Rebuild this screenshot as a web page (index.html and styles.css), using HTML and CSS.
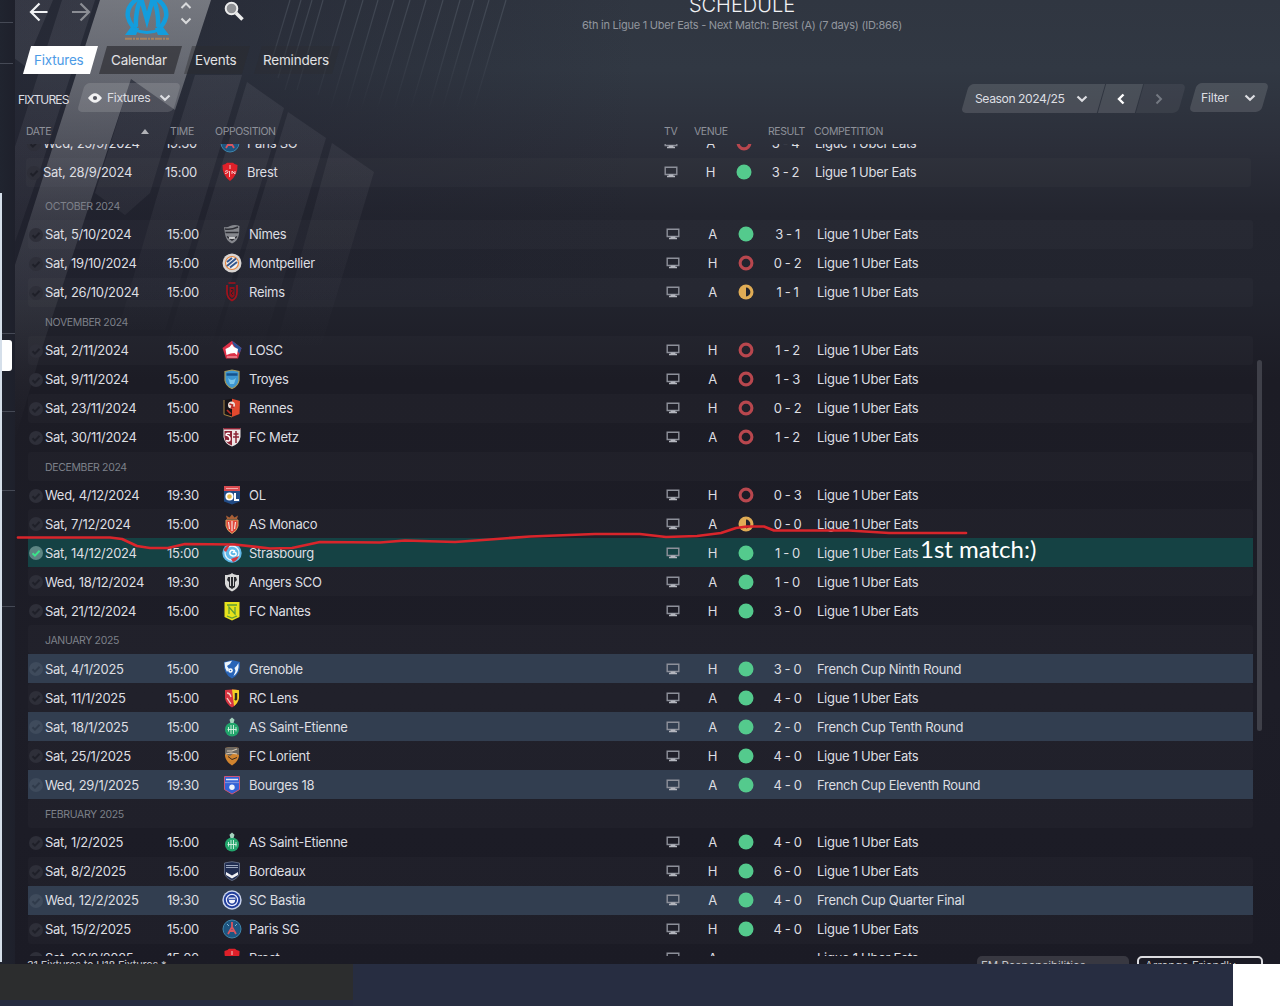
FILE: index.html
```html
<!DOCTYPE html>
<html lang="en">
<head>
    <meta charset="UTF-8">
    <meta name="viewport" content="width=device-width, initial-scale=1.0">
    <title>Schedule</title>
    <link rel="stylesheet" href="styles.css">
</head>
<body>
    <!-- Icons and club crests -->
    <svg class="defs" width="0" height="0">
        <symbol id="tv" viewBox="0 0 14 12"><path d="M1.2 1.2h11.6v7.3H1.2z" fill="none" stroke="#8d909a" stroke-width="1.4"/><path d="M4.6 8.6h4.8v1.2H11v1.4H3V9.800h1.600z" fill="#b4b6be"/></symbol>
        <symbol id="tick" viewBox="0 0 14 14"><circle cx="7" cy="7" r="7" class="tick-bg"/><path d="M3.500 7.300l2.400 2.300 4.700-4.800" fill="none" class="tick-mark" stroke-width="2"/></symbol>
        <symbol id="chevron" viewBox="0 0 12 8"><path d="M1.500 1.500L6 5.800l4.500-4.300" fill="none" stroke="currentColor" stroke-width="2.200"/></symbol>
        <symbol id="win" viewBox="0 0 16 16"><circle cx="8" cy="8" r="7.500" fill="#54ca8d"/></symbol>
        <symbol id="loss" viewBox="0 0 16 16"><circle cx="8" cy="8" r="5.900" fill="none" stroke="#b8474e" stroke-width="3.100"/></symbol>
        <symbol id="draw" viewBox="0 0 16 16"><circle cx="8" cy="8" r="7.500" fill="#e0ac55"/><path d="M8 3.600a4.400 4.400 0 0 1 0 8.800z" fill="#23242d"/></symbol>

        <symbol id="brest" viewBox="0 0 20 20"><path d="M2.500 3Q6 2 7 .8h6Q14 2 17.500 3q.5 10-7.500 16Q2 13 2.500 3z" fill="#df2029"/><path d="M10 3v4M5 9.500q3-2 3 0t-3 2M9.500 9v6M12 12V9l3 3V9" fill="none" stroke="#f3c9c9"/></symbol>
        <symbol id="nimes" viewBox="0 0 20 20"><path d="M2 3q3 1 6-1 5-2 9.500 0L17 10q-1 7-7 9.500Q4 17 3 10z" fill="#85878d"/><path d="M3 5q6 1 13-2M3.500 8.500h13M5 12.500l5 3.500 5-3.500" fill="none" stroke="#2d2e35" stroke-width="1.500"/><path d="M7 14h6" stroke="#e4e4e6" stroke-width="1.500"/></symbol>
        <symbol id="montpellier" viewBox="0 0 20 20"><circle cx="10" cy="10" r="9.500" fill="#d9d5d3"/><circle cx="10" cy="10" r="6.500" fill="#eee" stroke="#e7853d" stroke-width="1.200"/><path d="M5 9l5-4M5 13l9-7.500M8 14.500l7-5.500" stroke="#32558d" stroke-width="2"/></symbol>
        <symbol id="reims" viewBox="0 0 20 20"><path d="M6.500 1h7M5 3v7q0 6 5 8.500 5-2.500 5-8.500V3" fill="none" stroke="#a3121c" stroke-width="1.700"/><path d="M7.500 5h5v9L10 16l-2.500-2z" fill="#8f101a"/><path d="M9 7.500h2v2L9 11l2 2" fill="none" stroke="#25232b"/></symbol>
        <symbol id="losc" viewBox="0 0 20 20"><path d="M10 .7L19.500 8 16 18.500H4L.5 8z" fill="#dd3047"/><path d="M10 .7L19.500 8 17.500 14 11 4z" fill="#28549a"/><path d="M4.500 15l-1-6 4-2 2.500-3 2 3 4 2-1 6-2.500-2-4 .5z" fill="#fff"/><path d="M5 17h10" stroke="#f1b8bd"/></symbol>
        <symbol id="troyes" viewBox="0 0 20 20"><path d="M3 2.500L10 1l7 1.500v9Q16 17 10 19.500 4 17 3 11.500z" fill="#3d96d0" stroke="#a79b5a" stroke-width="1.200"/><path d="M4.500 5.500h11" stroke="#15528c" stroke-width="2.500"/><path d="M6 9q4 4 8 0l-2 6H8z" fill="#79c5ea"/></symbol>
        <symbol id="rennes" viewBox="0 0 20 20"><path d="M2 2L10 .7V19l-8-2z" fill="#161317"/><path d="M10 .7L18 3l-.5 13L10 19z" fill="#e2492e"/><path d="M2 2v14.500l8 2.500" fill="none" stroke="#a88444"/><circle cx="9.500" cy="7" r="3.500" fill="#ede3dc"/><path d="M7.500 6l3 1-1 3 3-1M5 12l4 4" fill="none" stroke="#b92b25" stroke-width="1.700"/></symbol>
        <symbol id="metz" viewBox="0 0 20 20"><path d="M1.500 1h17v9q-1 7-8.500 9.500Q2.500 17 1.500 10z" fill="#eee5e5"/><path d="M2.500 4H10v14.500Q3 16 2.500 10zM1.500 1h17v1.500h-17z" fill="#8d2436"/><path d="M8 6.500q-4-1-4 1.500 4 1 4 4t-4 1.500" fill="none" stroke="#fff" stroke-width="1.500"/><path d="M14 4v12M11.500 7h5M11 10h6" stroke="#8d2436" stroke-width="1.500"/></symbol>
        <symbol id="ol" viewBox="0 0 20 20"><path d="M2 1h16v5H2z" fill="#d84a4f"/><path d="M2 6h16v10.500L10 19.500l-8-3z" fill="#214b85"/><path d="M4 3.500h12" stroke="#f0abab"/><circle cx="7.500" cy="11.500" r="3.200" fill="#e6b94a" stroke="#fff" stroke-width="1.800"/><path d="M13 8v7h4" fill="none" stroke="#fff" stroke-width="2"/></symbol>
        <symbol id="monaco" viewBox="0 0 20 20"><path d="M5 5L4 1.500l3.500 2L10 .5l2.500 3 3.500-2L15 5z" fill="#a85f36"/><path d="M4 6h12v6q-1 5-6 7.500Q5 17 4 12z" fill="#e2463b" stroke="#d4a15e"/><path d="M6.500 8l1 7M10 7v10M13.500 8l-1 7" stroke="#f6e0d8" stroke-width="1.200"/></symbol>
        <symbol id="strasbourg" viewBox="0 0 20 20"><circle cx="10" cy="10" r="9.700" fill="#60b8e8"/><circle cx="10" cy="10" r="7" fill="none" stroke="#e8f3fa" stroke-width="1.300"/><path d="M1.500 7Q4 2.500 8 2l-4 7zM9 16l8-3q-2 5-6 6z" fill="#d53942"/><path d="M13 8q-4-2-5 1t3 4q4 0 3-3-2-2-3 0" fill="none" stroke="#fff" stroke-width="1.500"/></symbol>
        <symbol id="angers" viewBox="0 0 20 20"><path d="M3 3Q8 3 10 1q2 2 7 2v9q-1 5-7 7.500Q4 17 3 12z" fill="#d8d8d8"/><path d="M6 5h8l1 3-2 2v5l-3 2-3-2v-5L5 8z" fill="#292a2f"/><path d="M8.500 5v9M11.500 5v9" stroke="#d2d2d2"/></symbol>
        <symbol id="nantes" viewBox="0 0 20 20"><path d="M2.500 1h15v15L10 19.500 2.500 16z" fill="#e7e31c"/><path d="M7 13V6l6 7V6M5 4h10M5 15l5 2 5-2" fill="none" stroke="#5f9d35" stroke-width="1.300"/></symbol>
        <symbol id="grenoble" viewBox="0 0 20 20"><path d="M2 3l8-2 8 2q1 12-8 16.500Q1 15 2 3z" fill="#2864b7"/><path d="M2.500 3.500L10 1.700 8 5 5 7l2 3-2 3Q2.500 9 2.500 3.500zM16.500 4q1 9-5 13l2-5-1-3 2-2z" fill="#edf4fa"/><circle cx="8.500" cy="11.500" r="2.300" fill="#fff"/><circle cx="8.500" cy="11.500" r=".8" fill="#2864b7"/></symbol>
        <symbol id="lens" viewBox="0 0 20 20"><path d="M3 2q7-1 14 0v8q-1 6-7 9.500Q4 16 3 10z" fill="#d83442"/><path d="M10 1.500q4 0 7 .8V10q-1 5-5 8z" fill="#f2d026"/><path d="M5 5q3 0 4 4M5 10l4 6" fill="none" stroke="#f5d2c6" stroke-width="1.300"/><path d="M14 5v6l-1 1" fill="none" stroke="#2b2822" stroke-width="2.400"/></symbol>
        <symbol id="etienne" viewBox="0 0 20 20"><circle cx="10" cy="12.500" r="7" fill="#22a56c"/><path d="M10 .5l2.500 2.300L11.500 6h-3l-1-3.200z" fill="#a6d4bf"/><path d="M6.500 10v4.500M9 8v9M11.500 8v9M14 10v4.500M5.500 12.500h9" stroke="#d8f3e4" stroke-width=".9"/></symbol>
        <symbol id="lorient" viewBox="0 0 20 20"><path d="M3 2q7-2 14 0v8q-1 6-7 9.500Q4 16 3 10z" fill="#d1842f"/><path d="M3 2q7-2 14 0v7l-5-2-4 3-5-2z" fill="#6b6762"/><path d="M5 5h5l5-2M4 8l5-1 6 1" fill="none" stroke="#d8c8b1" stroke-width="1.200"/><path d="M6 10.500l4 3 5-2" fill="none" stroke="#392a22"/></symbol>
        <symbol id="bourges" viewBox="0 0 20 20"><path d="M2.500 1.500h15v13L10 19l-7.500-4.500z" fill="#3362d6" stroke="#cf5576"/><path d="M4 4.500h12" stroke="#e9ecf8" stroke-width="1.500"/><path d="M3 7.500h14" stroke="#7790dd" stroke-width="1.200"/><circle cx="10" cy="12.200" r="2.700" fill="#eef3fc"/></symbol>
        <symbol id="bordeaux" viewBox="0 0 20 20"><path d="M2.500 2L10 .7 17.500 2v10q-1 5-7.500 7.500Q3.500 17 2.500 12z" fill="#202d51" stroke="#6e7891" stroke-width=".8"/><path d="M4 4.500h12M4 6.500h12" stroke="#9ca7be" stroke-width="1.200"/><path d="M4 11l6 3.500 6-3.500v3l-6 3.500L4 14z" fill="#f1f1f5"/></symbol>
        <symbol id="bastia" viewBox="0 0 20 20"><circle cx="10" cy="10" r="9.700" fill="#c8d2eb"/><circle cx="10" cy="10" r="8.200" fill="#213e9b"/><circle cx="10" cy="10" r="5.600" fill="none" stroke="#eef" stroke-width="1.200"/><path d="M6.500 7.500h7l-.7 4.500q-2.800 3-5.600 0z" fill="#f1f3fb"/><path d="M7 9.300h6" stroke="#213e9b"/></symbol>
        <symbol id="psg" viewBox="0 0 20 20"><circle cx="10" cy="10" r="9" fill="#1e5580" stroke="#3f86ac"/><path d="M10 3v5l-4 7M10 8l4 7M7.500 12h5" fill="none" stroke="#d9565f" stroke-width="1.800"/><path d="M5 5l2 2M15 5l-2 2" stroke="#7fb4d3"/></symbol>
    </svg>

    <div class="app">
        <svg class="backdrop" width="1280" height="520" viewBox="0 0 1280 520">
            <defs>
                <linearGradient id="fadeBand" x1="0" y1="0" x2="0" y2="1">
                    <stop offset="0" stop-color="#b4b6ba" stop-opacity=".55"/>
                    <stop offset=".22" stop-color="#a6a8ae" stop-opacity=".44"/>
                    <stop offset=".5" stop-color="#9da0a8" stop-opacity=".2"/>
                    <stop offset="1" stop-color="#888b96" stop-opacity="0"/>
                </linearGradient>
                <linearGradient id="fadeShard" gradientUnits="userSpaceOnUse" x1="0" y1="40" x2="0" y2="350">
                    <stop offset="0" stop-color="#8f909c" stop-opacity=".15"/>
                    <stop offset=".5" stop-color="#8f909c" stop-opacity=".09"/>
                    <stop offset="1" stop-color="#8f909c" stop-opacity="0"/>
                </linearGradient>
                <linearGradient id="fadeLine" gradientUnits="userSpaceOnUse" x1="0" y1="0" x2="0" y2="110">
                    <stop offset="0" stop-color="#76808c" stop-opacity=".3"/>
                    <stop offset="1" stop-color="#76808c" stop-opacity="0"/>
                </linearGradient>
            </defs>
            <path class="band" d="M100 0H211L175 110 131 79 43 345 15 440V265L38 193z"/>
            <path class="shard" d="M14 0H53L25 66 14 58zM62 0H95L40 170 14 245V150zM131 79L175 110 150 193 125 215 95 193zM195 75H242L165 330H118L158 193zM247 82L284 108 210 350H165zM288 112L326 138 262 350H215zM332 143L374 172 320 350H275z"/>
            <path class="streaks" d="M290 0L272 60M301 0L278 78M312 0L285 90M323 0L297 90M346 0L318 95M363 0L330 110M378 0L343 120M394 0L358 120M410 0L374 120M426 0L388 130M443 0L403 135M460 0L420 140M474 0L432 145M489 0L445 150M506 0L460 155"/>
        </svg>

        <aside class="rail">
            <span class="rail-line rail-a"></span>
            <span class="rail-line rail-b"></span>
            <span class="rail-line rail-c"></span>
            <span class="rail-active"></span>
            <span class="rail-line rail-d"></span>
            <span class="rail-line rail-e"></span>
            <span class="rail-line rail-f"></span>
        </aside>

        <main class="screen">
            <header class="topbar">
                <div class="nav-icons">
                    <svg width="20" height="20" viewBox="0 0 20 20"><path d="M18.500 10H2M10.500 1.500L2 10l8.500 8.500" fill="none" stroke="#f1f2f4" stroke-width="2.200"/></svg>
                    <svg class="next" width="20" height="20" viewBox="0 0 20 20"><path d="M1 10h17M9.500 1.500L18 10l-8.500 8.500" fill="none" stroke="#8b8d94" stroke-width="2.200"/></svg>
                    <svg class="club" width="48" height="42" viewBox="0 0 48 42">
                        <path d="M14 -1Q3 7 5 17q2 8 8 12M34-1q11 8 9 18-2 8-8 12" fill="none" stroke="#139ddd" stroke-width="4.500"/>
                        <path d="M2 35l6-8 8 1-3 7zM46 35l-6-8-8 1 3 7z" fill="#139ddd"/>
                        <path d="M13 27Q12 12 18-2l6 22 6-22q6 14 5 29" fill="none" stroke="#139ddd" stroke-width="4.500"/>
                        <path d="M10 29q14 7 28 0" fill="none" stroke="#139ddd" stroke-width="3"/>
                        <path d="M2 38.800h45" stroke="#a8825f" stroke-width="2" stroke-dasharray="7 1 2 1 3 1"/>
                    </svg>
                    <svg class="switch" width="12" height="24" viewBox="0 0 12 24"><path d="M1.500 7L6 2.500 10.500 7M1.500 17.500L6 22l4.500-4.500" fill="none" stroke="#d8d9db" stroke-width="2"/></svg>
                    <svg class="search" width="20" height="20" viewBox="0 0 20 20"><circle cx="7.500" cy="7.500" r="5.800" fill="#8e9094" stroke="#eceded" stroke-width="2"/><path d="M12 12l6.500 6.500" stroke="#eceded" stroke-width="3.500"/></svg>
                </div>
                <div class="title">
                    <h1>SCHEDULE</h1>
                    <p>6th in Ligue 1 Uber Eats - Next Match: Brest (A) (7 days) (ID:866)</p>
                </div>
            </header>

            <nav class="tabs">
                <a class="tab active"><span>Fixtures</span></a>
                <a class="tab tab-calendar"><span>Calendar</span></a>
                <a class="tab tab-events"><span>Events</span></a>
                <a class="tab tab-reminders"><span>Reminders</span></a>
            </nav>

            <div class="toolbar">
                <h2>FIXTURES</h2>
                <div class="pill view">
                    <svg width="14" height="10" viewBox="0 0 14 10"><path d="M0 5q7-9.500 14 0-7 9.500-14 0z" fill="#f1f1f2"/><circle cx="7" cy="5" r="2.100" fill="#54565f"/></svg>
                    <span>Fixtures</span>
                    <svg class="chev" width="12" height="8"><use href="#chevron"/></svg>
                </div>
                <div class="season">
                    <div class="pill year"><span>Season 2024/25</span><svg class="chev" width="12" height="8"><use href="#chevron"/></svg></div>
                    <div class="pill prev"><svg width="8" height="12" viewBox="0 0 8 12"><path d="M6.500 1.500L2 6l4.500 4.500" fill="none" stroke="#fff" stroke-width="2.400"/></svg></div>
                    <div class="pill nextyear"><svg width="8" height="12" viewBox="0 0 8 12"><path d="M1.500 1.500L6 6l-4.500 4.500" fill="none" stroke="#747982" stroke-width="2"/></svg></div>
                </div>
                <div class="pill filter"><span>Filter</span><svg class="chev" width="12" height="8"><use href="#chevron"/></svg></div>
            </div>

            <div class="columns">
                <span>DATE</span><i class="sort"></i><span>TIME</span><span>OPPOSITION</span><span>TV</span><span>VENUE</span><span>RESULT</span><span>COMPETITION</span>
            </div>
            <div class="list list-top" id="september"></div>
            <div class="list list-main" id="season"></div>

            <footer class="actions">
                <span class="count">31 Fixtures to U18 Fixtures *</span>
                <span class="button dark">FM Responsibilities <b>⌄</b></span>
                <span class="button outline">Arrange Friendly <b>⌄</b></span>
            </footer>
        </main>

        <span class="scrollbar"></span>

        <svg class="redline" width="960" height="40" viewBox="0 0 960 40">
            <path d="M3 17.500H95l12 1.500 15 7 13 2h18l17-4 50 .5 35 4 22-.5 28-6 60 .5 25-2 50 1.500 35-2.500 40-3 65-2.500h45l26 3 31-1 24-3 15-5 11-1.500h17l10 4h75l40 2.500h77" fill="none" stroke="#d9252b" stroke-width="2.700" stroke-linejoin="round" stroke-linecap="round"/>
        </svg>
        <span class="note">1st match:)</span>
    </div>
    <div class="desktop">
        <div class="desktop-left"></div>
        <div class="desktop-mid"></div>
        <div class="desktop-right"></div>
    </div>
    <script src="script.js"></script>
</body>
</html>
```
FILE: styles.css
```css
* {
    box-sizing: border-box;
}
body {
    margin: 0;
    width: 1280px;
    height: 1006px;
    overflow: hidden;
    font-family: Inter, "Open Sans", sans-serif;
    font-size: 13px;
    color: #dddee2;
    background: #272d41;
}
h1, h2, p {
    margin: 0;
    font-weight: 400;
}
svg {
    display: block;
    flex: none;
}
.defs {
    position: absolute;
}
.app {
    position: relative;
    display: flex;
    height: 964px;
    overflow: hidden;
    background: linear-gradient(#303641 0, #313843 70px, #2b2e39 150px, #23252f 215px, #22242e 290px, #1c1c25 380px, #1d1d27 700px, #1b1b25 964px);
}
.backdrop {
    position: absolute;
    left: 0;
    top: 0;
}
/* The left part of the header is a bit darker */
.app::before {
    content: "";
    position: absolute;
    left: 0;
    top: 0;
    width: 640px;
    height: 300px;
    background: linear-gradient(90deg, rgba(30, 31, 44, .6), rgba(30, 31, 44, 0));
}
.band {
    fill: url(#fadeBand);
}
.shard {
    fill: url(#fadeShard);
}
.streaks {
    fill: none;
    stroke: url(#fadeLine);
    stroke-width: 1.2;
}

/* Left edge of the side menu */
.rail {
    position: relative;
    width: 15px;
    flex: none;
    background: linear-gradient(90deg, #20242f, #1e202b);
}
.rail::before {
    content: "";
    position: absolute;
    left: 0;
    top: 193px;
    width: 2px;
    bottom: 2px;
    background: #d5dfea;
}
.rail-line {
    position: absolute;
    left: 2px;
    width: 13px;
    height: 1px;
    background: #454955;
}
.rail-a { top: 22px; left: 0; }
.rail-b { top: 63px; left: 0; }
.rail-c { top: 333px; }
.rail-d { top: 411px; }
.rail-e { top: 490px; }
.rail-f { top: 606px; }
.rail-active {
    position: absolute;
    left: 2px;
    top: 340px;
    width: 10px;
    height: 31px;
    border-radius: 0 3px 3px 0;
    background: #fff;
}

.screen {
    position: relative;
    flex: 1;
    min-width: 0;
    display: flex;
    flex-direction: column;
}
.topbar {
    display: flex;
    height: 46px;
}
.nav-icons {
    display: flex;
    width: 557px;
    padding-left: 14px;
}
.nav-icons svg {
    margin-top: 2px;
}
.nav-icons .next {
    margin-left: 22px;
}
.nav-icons .club {
    margin: 0 0 0 32px;
}
.nav-icons .switch {
    margin: 1px 0 0 9px;
}
.nav-icons .search {
    margin: 1px 0 0 32px;
}
.title {
    width: 340px;
    text-align: center;
}
.title h1 {
    height: 18px;
    margin-top: -7px;
    line-height: 24px;
    font-size: 20px;
    font-weight: 300;
    color: #f0f1f3;
}
.title p {
    margin-top: 7px;
    font-size: 11px;
    line-height: 14px;
    letter-spacing: -.24px;
    color: #92969e;
    white-space: nowrap;
}

.tabs {
    display: flex;
    height: 28px;
    padding-left: 12px;
    margin-bottom: 1px;
}
.tab {
    display: flex;
    align-items: center;
    justify-content: center;
    width: 67px;
    margin-right: 9px;
    font-size: 13.5px;
    letter-spacing: -.2px;
    color: #e2e2e4;
    transform: skewX(-16deg);
    background: rgba(42, 42, 46, .65);
}
.tab span {
    transform: skewX(16deg);
}
.tab.active {
    color: #4d9be6;
    background: #fff;
}
.tab.active span { margin-left: -3px; }
.tab-calendar { width: 75px; margin-right: 10px; }
.tab-events { width: 58px; margin-right: 12px; background: rgba(42, 42, 46, .4); }
.tab-reminders { width: 78px; background: rgba(42, 42, 46, .3); }
.tab-calendar span { margin-left: -4px; }
.tab-events span,
.tab-reminders span { margin-left: -3px; }

.toolbar {
    display: flex;
    height: 42px;
    padding: 8px 11px 0 3px;
}
.toolbar h2 {
    width: 59px;
    font-size: 12px;
    line-height: 33px;
    letter-spacing: -.85px;
}
.pill {
    position: relative;
    display: flex;
    align-items: center;
    height: 29px;
    font-size: 12.2px;
    letter-spacing: -.2px;
}
.pill::before {
    content: "";
    position: absolute;
    inset: 0 4px;
    border-radius: 5px;
    background: rgba(255, 255, 255, .13);
    transform: skewX(-16deg);
}
.pill span,
.pill svg {
    position: relative;
}
.view {
    width: 104px;
    padding-left: 11px;
}
.view span {
    width: 44px;
    margin: 0 8px 0 5px;
    letter-spacing: -.35px;
}
.season {
    display: flex;
    margin-left: auto;
    padding-top: 1px;
}
.year {
    width: 144px;
    padding-left: 14px;
}
.year span {
    width: 90px;
    margin-right: 11px;
    letter-spacing: -.45px;
    white-space: nowrap;
}
.year::before { border-radius: 5px 0 0 5px; }
.prev {
    width: 45px;
    margin-left: -7px;
    padding-left: 19px;
}
.prev::before { border-radius: 0; }
.nextyear {
    width: 50px;
    margin-left: -7px;
    padding-left: 19px;
}
.nextyear::before {
    border-radius: 0 5px 5px 0;
    background: rgba(255, 255, 255, .06);
}
.filter {
    width: 80px;
    margin-left: 3px;
    padding-left: 12px;
}
.filter span {
    width: 31px;
    margin-right: 12px;
}

.columns {
    display: grid;
    grid-template-columns: 115px 29px 45px 449px 30px 74px 46px 1fr;
    align-items: center;
    height: 27px;
    padding: 1px 0 0 11px;
    font-size: 10.5px;
    color: #8e919a;
    letter-spacing: -.4px;
}
.sort {
    width: 0;
    border: 4px solid transparent;
    border-top: 0;
    border-bottom: 5px solid #b2b3b8;
}

.list {
    margin-left: 13px;
    width: 1225px;
    overflow: hidden;
}
.list-top {
    height: 47px;
    margin-left: 11px;
    padding: 0;
}
.list-top .row:first-child {
    margin-top: -15px;
}
.list-main {
    height: 765px;
}
.row {
    --tick-bg: #2e2f39;
    --tick-mark: #1f2029;
    display: grid;
    grid-template-columns: 17px 114px 40px 50px 408px 32px 47px 20px 61px 1fr;
    align-items: center;
    height: 28.960px;
    border-radius: 3px;
    white-space: nowrap;
    letter-spacing: -.28px;
}
.row:nth-child(even) {
    background: rgba(255, 255, 255, .018);
}
.row.month {
    display: block;
    padding-left: 17px;
    font-size: 10.5px;
    line-height: 31px;
    letter-spacing: -.35px;
    color: #7d8089;
}
.row.cup {
    --tick-bg: #3f4b5c;
    --tick-mark: #303b4b;
    background: #323e50;
    border-radius: 0;
}
.row.current {
    --tick-bg: #5d8583;
    --tick-mark: #3be38b;
    background: #154244;
    border-radius: 0;
}
.tick {
    margin: 1px 0 0 1px;
}
.tick-bg { fill: var(--tick-bg); }
.tick-mark { stroke: var(--tick-mark); }
.time {
    text-align: right;
}
.crest {
    margin-left: 23px;
}
.tv,
.form {
    justify-self: center;
}
.venue,
.score {
    text-align: center;
}
.score {
    padding-left: 2px;
    letter-spacing: -.4px;
}

.actions {
    display: flex;
    height: 8px;
    padding-left: 12px;
    overflow: hidden;
    font-size: 11.5px;
    line-height: 14px;
    color: #c4c5ca;
    white-space: nowrap;
}
.count {
    width: 950px;
    padding-top: 2px;
    font-size: 11px;
    letter-spacing: -.2px;
}
.button {
    height: 28px;
    padding: 3px 4px;
    border-radius: 5px;
}
.button.dark {
    width: 152px;
    background: #383841;
}
.button.outline {
    width: 126px;
    margin-left: 8px;
    padding: 1px 6px;
    border: 2px solid #dcdce0;
}
.scrollbar {
    position: absolute;
    left: 1257px;
    top: 360px;
    width: 5px;
    height: 371px;
    border-radius: 3px;
    background: #3f4049;
}

/* Hand-drawn annotation over the list */
.redline {
    position: absolute;
    left: 15px;
    top: 520px;
}
.note {
    position: absolute;
    left: 920px;
    top: 534px;
    font-family: Lato, sans-serif;
    font-size: 24px;
    line-height: 30px;
    color: #fff;
}

.desktop {
    display: flex;
    height: 42px;
    background: #262b40;
}
.desktop-left {
    width: 353px;
    height: 36px;
    background: #2c2d2e;
}
.desktop-mid {
    width: 880px;
    background: #272d41;
}
.desktop-right {
    flex: 1;
    background: #fff;
}
```
FILE: script.js
```js
const L1 = 'Ligue 1 Uber Eats';

// [date, time, crest, opposition, venue, form, score, competition]
const september = [
    ['Wed, 25/9/2024', '19:30', 'psg', 'Paris SG', 'A', 'loss', '3 - 4', L1],
    ['Sat, 28/9/2024', '15:00', 'brest', 'Brest', 'H', 'win', '3 - 2', L1]
];

const season = [
    'OCTOBER 2024',
    ['Sat, 5/10/2024', '15:00', 'nimes', 'Nîmes', 'A', 'win', '3 - 1', L1],
    ['Sat, 19/10/2024', '15:00', 'montpellier', 'Montpellier', 'H', 'loss', '0 - 2', L1],
    ['Sat, 26/10/2024', '15:00', 'reims', 'Reims', 'A', 'draw', '1 - 1', L1],
    'NOVEMBER 2024',
    ['Sat, 2/11/2024', '15:00', 'losc', 'LOSC', 'H', 'loss', '1 - 2', L1],
    ['Sat, 9/11/2024', '15:00', 'troyes', 'Troyes', 'A', 'loss', '1 - 3', L1],
    ['Sat, 23/11/2024', '15:00', 'rennes', 'Rennes', 'H', 'loss', '0 - 2', L1],
    ['Sat, 30/11/2024', '15:00', 'metz', 'FC Metz', 'A', 'loss', '1 - 2', L1],
    'DECEMBER 2024',
    ['Wed, 4/12/2024', '19:30', 'ol', 'OL', 'H', 'loss', '0 - 3', L1],
    ['Sat, 7/12/2024', '15:00', 'monaco', 'AS Monaco', 'A', 'draw', '0 - 0', L1],
    ['Sat, 14/12/2024', '15:00', 'strasbourg', 'Strasbourg', 'H', 'win', '1 - 0', L1, 'current'],
    ['Wed, 18/12/2024', '19:30', 'angers', 'Angers SCO', 'A', 'win', '1 - 0', L1],
    ['Sat, 21/12/2024', '15:00', 'nantes', 'FC Nantes', 'H', 'win', '3 - 0', L1],
    'JANUARY 2025',
    ['Sat, 4/1/2025', '15:00', 'grenoble', 'Grenoble', 'H', 'win', '3 - 0', 'French Cup Ninth Round', 'cup'],
    ['Sat, 11/1/2025', '15:00', 'lens', 'RC Lens', 'A', 'win', '4 - 0', L1],
    ['Sat, 18/1/2025', '15:00', 'etienne', 'AS Saint-Etienne', 'A', 'win', '2 - 0', 'French Cup Tenth Round', 'cup'],
    ['Sat, 25/1/2025', '15:00', 'lorient', 'FC Lorient', 'H', 'win', '4 - 0', L1],
    ['Wed, 29/1/2025', '19:30', 'bourges', 'Bourges 18', 'A', 'win', '4 - 0', 'French Cup Eleventh Round', 'cup'],
    'FEBRUARY 2025',
    ['Sat, 1/2/2025', '15:00', 'etienne', 'AS Saint-Etienne', 'A', 'win', '4 - 0', L1],
    ['Sat, 8/2/2025', '15:00', 'bordeaux', 'Bordeaux', 'H', 'win', '6 - 0', L1],
    ['Wed, 12/2/2025', '19:30', 'bastia', 'SC Bastia', 'A', 'win', '4 - 0', 'French Cup Quarter Final', 'cup'],
    ['Sat, 15/2/2025', '15:00', 'psg', 'Paris SG', 'H', 'win', '4 - 0', L1],
    ['Sat, 22/2/2025', '15:00', 'brest', 'Brest', 'A', '', '-', L1]
];

function icon(name, cls, w, h) {
    return `<svg class="${cls}" width="${w}" height="${h}"><use href="#${name}"/></svg>`;
}

function renderRow(item) {
    if (typeof item === 'string') {
        return `<div class="row month">${item}</div>`;
    }
    const [date, time, crest, team, venue, form, score, comp, type] = item;
    return `<div class="row ${type || ''}">
        ${icon('tick', 'tick', 14, 14)}
        <span>${date}</span>
        <span class="time">${time}</span>
        ${icon(crest, 'crest', 20, 20)}
        <span>${team}</span>
        ${icon('tv', 'tv', 14, 12)}
        <span class="venue">${venue}</span>
        ${form ? icon(form, 'form', 16, 16) : '<span></span>'}
        <span class="score">${score}</span>
        <span>${comp}</span>
    </div>`;
}

document.getElementById('september').innerHTML = september.map(renderRow).join('');
document.getElementById('season').innerHTML = season.map(renderRow).join('');
```
